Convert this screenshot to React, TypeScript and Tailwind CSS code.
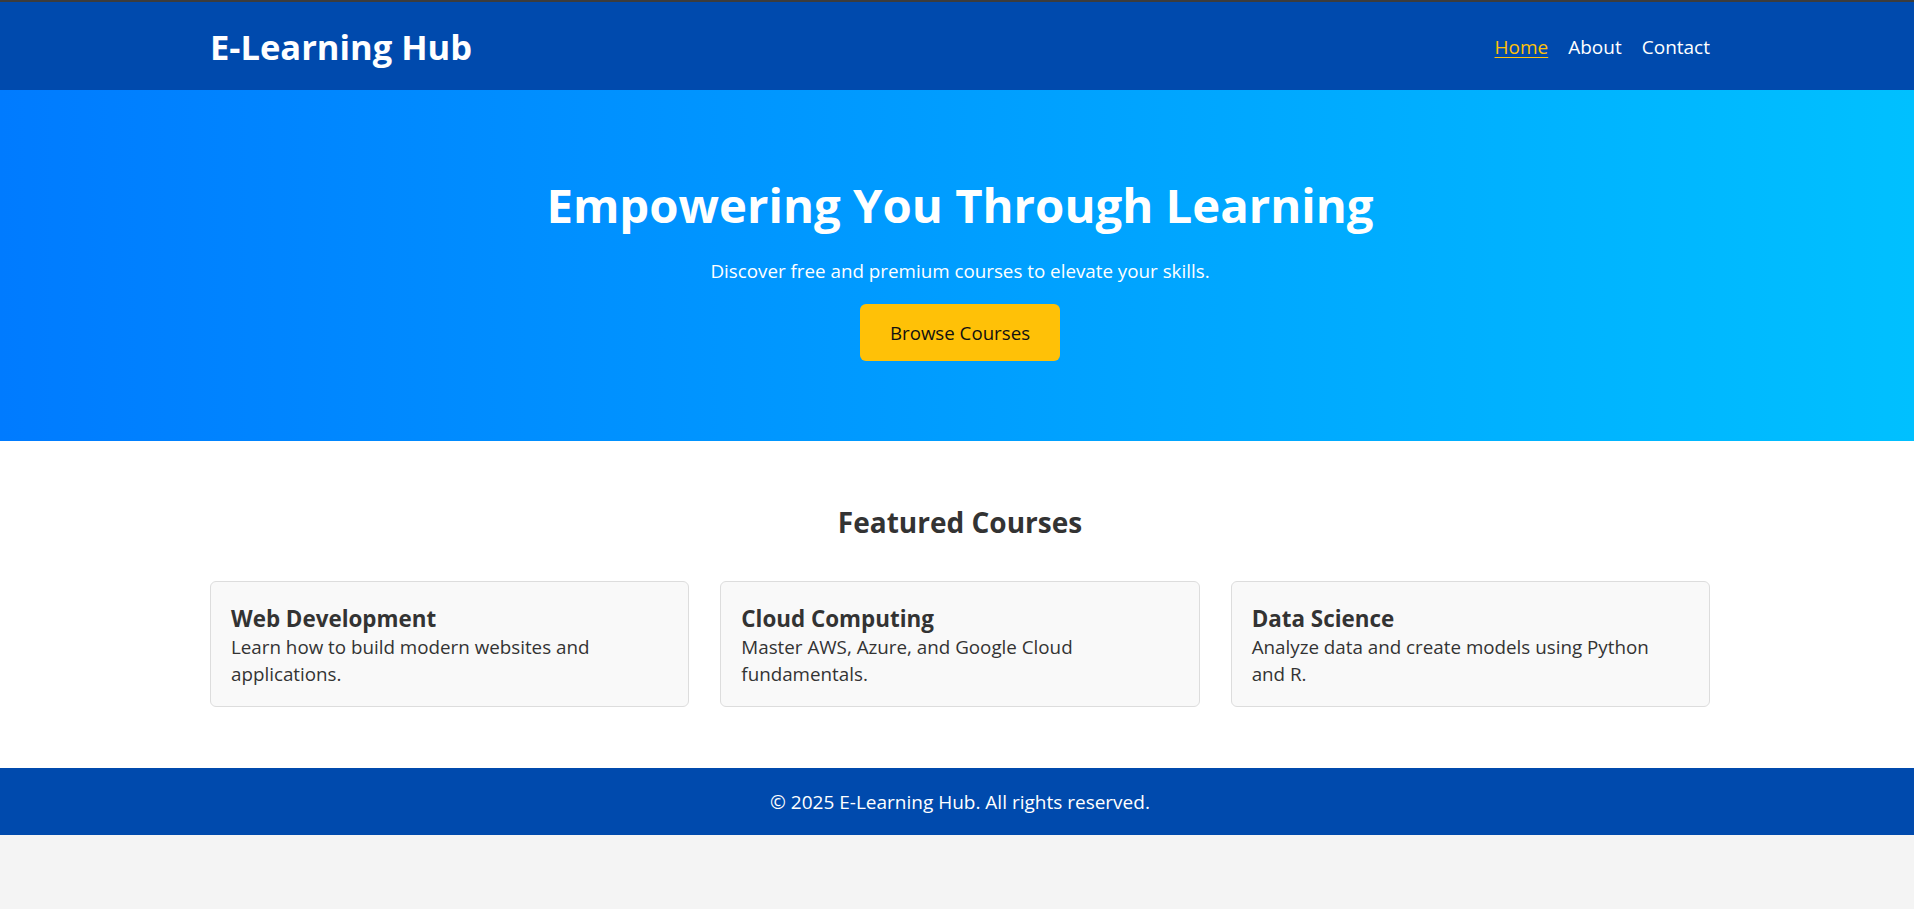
import React from "react";

const courses = [
  {
    title: "Web Development",
    lines: ["Learn how to build modern websites and", "applications."],
  },
  {
    title: "Cloud Computing",
    lines: ["Master AWS, Azure, and Google Cloud", "fundamentals."],
  },
  {
    title: "Data Science",
    lines: ["Analyze data and create models using Python", "and R."],
  },
];

export default function App() {
  return (
    <div
      className="min-h-screen bg-[#f4f4f4] text-[#333]"
      style={{ fontFamily: '"Open Sans", "Noto Sans", Arial, sans-serif' }}
    >
      <div className="h-[2px] bg-[#3c3c3c]" />
      <header className="bg-[#004aad] pb-[19px] pt-[21px]">
        <div className="ml-[210px] flex w-[1500px] items-center justify-between">
          <div className="text-[34.5px] font-bold leading-[48px] text-white">E-Learning Hub</div>
          <nav className="flex items-center gap-5 text-[19px] leading-[27px] text-white">
            <a href="#" className="text-[#ffc107] underline underline-offset-[3px]">
              Home
            </a>
            <a href="#">About</a>
            <a href="#">Contact</a>
          </nav>
        </div>
      </header>

      <section className="bg-[linear-gradient(to_right,#007bff,#00c0ff)] pb-[80px] pt-[82px] text-white">
        <div className="ml-[210px] flex w-[1500px] flex-col items-center text-center">
          <h1 className="mb-5 text-[47.3px] font-bold leading-[66px]">Empowering You Through Learning</h1>
          <p className="text-[18.8px] leading-[27px]">Discover free and premium courses to elevate your skills.</p>
          <a
            href="#"
            className="mt-[19px] rounded-[6px] bg-[#ffc107] px-[30px] py-[15px] text-[18.7px] leading-[27px] text-[#111]"
          >
            Browse Courses
          </a>
        </div>
      </section>

      <main className="bg-white pb-[61px] pt-[61px]">
        <div className="ml-[210px] w-[1500px]">
          <h2 className="mb-[39px] text-center text-[28px] font-bold leading-[40px] text-[#333]">Featured Courses</h2>
          <div className="grid grid-cols-3 gap-[31px]">
            {courses.map((c) => (
              <div
                key={c.title}
                className="rounded-[6px] border border-[#dddddd] bg-[#f9f9f9] px-5 pb-[18px] pt-[21px]"
              >
                <h3 className="text-[22.4px] font-bold leading-[31px] text-[#333]">{c.title}</h3>
                <p className="text-[18.8px] leading-[27px] text-[#333]">
                  {c.lines[0]}
                  <br />
                  {c.lines[1]}
                </p>
              </div>
            ))}
          </div>
        </div>
      </main>

      <footer className="bg-[#004aad] pb-[19px] pt-[21px] text-center text-[19px] leading-[27px] text-white">
        <div className="ml-[210px] w-[1500px]">© 2025 E-Learning Hub. All rights reserved.</div>
      </footer>
    </div>
  );
}
